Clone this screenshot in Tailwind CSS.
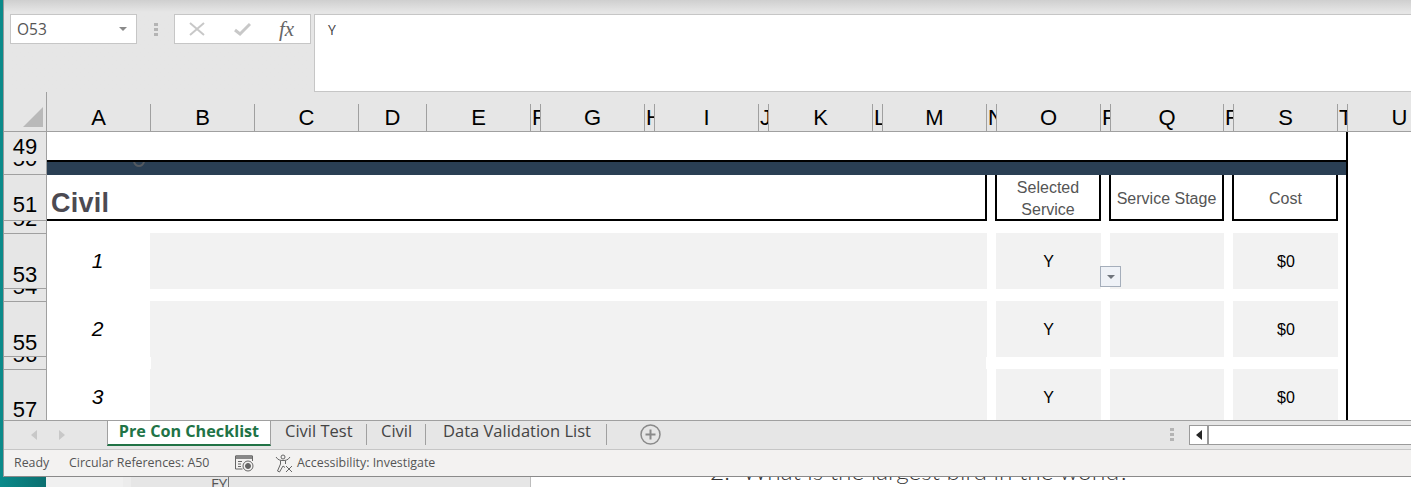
<!DOCTYPE html>
<html>
<head>
    <meta charset="UTF-8">
    <script src="https://cdn.jsdelivr.net/npm/@tailwindcss/browser@4"></script>
</head>
<body class="bg-white">
    <div class="w-[1411px] h-[487px] overflow-hidden flex flex-col font-['Liberation_Sans',Arial,sans-serif]">
        <div class="h-[477px] flex">
            <div class="w-[3px] shrink-0 bg-[#0b8a8a]"></div>
            <div class="w-[1408px] shrink-0 flex flex-col border-l border-[#9a9a9a]">

                <!-- formula bar -->
                <div class="h-[92px] bg-linear-to-b from-[#cfcfcf] to-[#e6e6e6] to-[12px] flex items-start pt-[14px] pl-[6px]">
                    <div class="w-[127px] h-[30px] shrink-0 bg-white border border-[#c6c6c6] flex items-center justify-between pl-[6px] pr-[9px]">
                        <span class="pt-[1px] font-['Open_Sans',sans-serif] text-[15.5px] text-[#555]">O53</span>
                        <svg width="8" height="4" viewBox="0 0 8 4"><path d="M0 0h8L4 4z" fill="#8a8a8a"/></svg>
                    </div>
                    <div class="w-[37px] h-[30px] shrink-0 flex items-center justify-center">
                        <svg width="4" height="13" viewBox="0 0 4 13" fill="#b4b4b4"><rect width="4" height="3"/><rect y="5" width="4" height="3"/><rect y="10" width="4" height="3"/></svg>
                    </div>
                    <div class="w-[137px] h-[30px] shrink-0 bg-white border border-[#c6c6c6] flex items-center pl-[14px]">
                        <svg width="16" height="14" viewBox="0 0 16 14"><path d="M1 1l14 12M15 1L1 13" stroke="#c8c8c8" stroke-width="2" fill="none"/></svg>
                        <svg class="ml-[29px]" width="17" height="14" viewBox="0 0 17 14"><path d="M1 8l5 4L16 2" stroke="#c8c8c8" stroke-width="3" fill="none"/></svg>
                        <span class="ml-[28px] font-['Liberation_Serif',serif] italic text-[21px] text-[#666] leading-none">fx</span>
                    </div>
                    <div class="ml-[3px] w-[1097px] h-[78px] shrink-0 bg-white border-l border-y border-[#c6c6c6] pl-[13px] pt-[4px] font-['Open_Sans',sans-serif] text-[14px] text-[#444]">Y</div>
                </div>

                <!-- sheet -->
                <div class="h-[328px] overflow-hidden bg-white grid grid-cols-[43px_103px_104px_104px_68px_104px_10px_104px_10px_104px_10px_104px_10px_104px_10px_104px_10px_113px_10px_104px_10px_104px] grid-rows-[40px_29px_14px_46px_12px_56px_12px_56px_12px_51px]">

                    <!-- column letters -->
                    <div class="row-start-1 col-start-1 col-span-22 bg-[#e6e6e6] border-b border-[#a0a0a0]"></div>
                    <div class="row-start-1 col-start-1 flex items-end justify-end pb-[4px] pr-[3px] border-r border-b border-[#a0a0a0] z-10">
                        <svg width="20" height="20" viewBox="0 0 20 20"><path d="M20 0v20H0z" fill="#b9b9b9"/></svg>
                    </div>
                    <div class="row-start-1 col-start-2 self-end h-[28px] border-b border-[#a0a0a0] text-center text-[22px] leading-[27px] z-10">A</div>
                    <div class="row-start-1 col-start-3 self-end h-[28px] border-l border-b border-[#a0a0a0] text-center text-[22px] leading-[27px] z-10">B</div>
                    <div class="row-start-1 col-start-4 self-end h-[28px] border-l border-b border-[#a0a0a0] text-center text-[22px] leading-[27px] z-10">C</div>
                    <div class="row-start-1 col-start-5 self-end h-[28px] border-l border-b border-[#a0a0a0] text-center text-[22px] leading-[27px] z-10">D</div>
                    <div class="row-start-1 col-start-6 self-end h-[28px] border-l border-b border-[#a0a0a0] text-center text-[22px] leading-[27px] z-10">E</div>
                    <div class="row-start-1 col-start-7 self-end h-[28px] border-l border-b border-[#a0a0a0] overflow-hidden pl-[1px] text-[22px] leading-[27px] z-10">F</div>
                    <div class="row-start-1 col-start-8 self-end h-[28px] border-l border-b border-[#a0a0a0] text-center text-[22px] leading-[27px] z-10">G</div>
                    <div class="row-start-1 col-start-9 self-end h-[28px] border-l border-b border-[#a0a0a0] overflow-hidden pl-[1px] text-[22px] leading-[27px] z-10">H</div>
                    <div class="row-start-1 col-start-10 self-end h-[28px] border-l border-b border-[#a0a0a0] text-center text-[22px] leading-[27px] z-10">I</div>
                    <div class="row-start-1 col-start-11 self-end h-[28px] border-l border-b border-[#a0a0a0] overflow-hidden pl-[1px] text-[22px] leading-[27px] z-10">J</div>
                    <div class="row-start-1 col-start-12 self-end h-[28px] border-l border-b border-[#a0a0a0] text-center text-[22px] leading-[27px] z-10">K</div>
                    <div class="row-start-1 col-start-13 self-end h-[28px] border-l border-b border-[#a0a0a0] overflow-hidden pl-[1px] text-[22px] leading-[27px] z-10">L</div>
                    <div class="row-start-1 col-start-14 self-end h-[28px] border-l border-b border-[#a0a0a0] text-center text-[22px] leading-[27px] z-10">M</div>
                    <div class="row-start-1 col-start-15 self-end h-[28px] border-l border-b border-[#a0a0a0] overflow-hidden pl-[1px] text-[22px] leading-[27px] z-10">N</div>
                    <div class="row-start-1 col-start-16 self-end h-[28px] border-l border-b border-[#a0a0a0] text-center text-[22px] leading-[27px] z-10">O</div>
                    <div class="row-start-1 col-start-17 self-end h-[28px] border-l border-b border-[#a0a0a0] overflow-hidden pl-[1px] text-[22px] leading-[27px] z-10">P</div>
                    <div class="row-start-1 col-start-18 self-end h-[28px] border-l border-b border-[#a0a0a0] text-center text-[22px] leading-[27px] z-10">Q</div>
                    <div class="row-start-1 col-start-19 self-end h-[28px] border-l border-b border-[#a0a0a0] overflow-hidden pl-[1px] text-[22px] leading-[27px] z-10">R</div>
                    <div class="row-start-1 col-start-20 self-end h-[28px] border-l border-b border-[#a0a0a0] text-center text-[22px] leading-[27px] z-10">S</div>
                    <div class="row-start-1 col-start-21 self-end h-[28px] border-l border-b border-[#a0a0a0] overflow-hidden pl-[1px] text-[22px] leading-[27px] z-10">T</div>
                    <div class="row-start-1 col-start-22 self-end h-[28px] border-l border-b border-[#a0a0a0] text-center text-[22px] leading-[27px] z-10">U</div>

                    <!-- row numbers -->
                    <div class="row-start-2 col-start-1 bg-[#e6e6e6] border-r border-[#a0a0a0] overflow-hidden flex items-end justify-center pb-[3px] text-[22px] leading-[22px]">49</div>
                    <div class="row-start-3 col-start-1 bg-[#e6e6e6] border-r border-b border-[#a0a0a0] overflow-hidden flex items-end justify-center pb-[4px] text-[22px] leading-[22px]">50</div>
                    <div class="row-start-4 col-start-1 bg-[#e6e6e6] border-r border-b border-[#a0a0a0] overflow-hidden flex items-end justify-center pb-[4px] text-[22px] leading-[22px]">51</div>
                    <div class="row-start-5 col-start-1 bg-[#e6e6e6] border-r border-[#a0a0a0] overflow-hidden flex items-end justify-center pb-[3px] text-[22px] leading-[22px]">52</div>
                    <div class="row-start-6 col-start-1 bg-[#e6e6e6] border-r border-y border-[#a0a0a0] overflow-hidden flex items-end justify-center pb-[2px] text-[22px] leading-[22px]">53</div>
                    <div class="row-start-7 col-start-1 bg-[#e6e6e6] border-r border-[#a0a0a0] overflow-hidden flex items-end justify-center pb-[3px] text-[22px] leading-[22px]">54</div>
                    <div class="row-start-8 col-start-1 bg-[#e6e6e6] border-r border-y border-[#a0a0a0] overflow-hidden flex items-end justify-center pb-[2px] text-[22px] leading-[22px]">55</div>
                    <div class="row-start-9 col-start-1 bg-[#e6e6e6] border-r border-[#a0a0a0] overflow-hidden flex items-end justify-center pb-[3px] text-[22px] leading-[22px]">56</div>
                    <div class="row-start-10 col-start-1 bg-[#e6e6e6] border-r border-t border-[#a0a0a0] overflow-hidden flex items-end justify-center text-[22px] leading-[20px]">57</div>

                    <!-- right edge of the print area -->
                    <div class="row-start-2 row-span-9 col-start-21 -mr-[1px] border-r-2 border-black"></div>

                    <!-- section bar -->
                    <div class="relative row-start-3 col-start-2 col-span-20 -mt-[1px] -mr-[1px] bg-[#2a3f54] border-t-2 border-r-2 border-black">
                        <svg class="absolute left-[85px] top-0" width="14" height="6" viewBox="0 0 14 6"><path d="M2 0c1 3 3 4 5 4s4-1 5-4" stroke="#555a60" stroke-width="2" fill="none"/></svg>
                    </div>

                    <!-- Civil header -->
                    <div class="row-start-4 col-start-2 col-span-13 -mr-[1px] border-r-2 border-b-2 border-black pl-[4px] flex items-end font-bold text-[27px] leading-[32px] tracking-[0.25px] text-[#4c4a52]">Civil</div>
                    <div class="row-start-4 col-start-16 -mx-[1px] border-x-2 border-b-2 border-black pt-[4px] flex items-center justify-center text-center text-[16px] leading-[22px] text-[#555]">Selected<br>Service</div>
                    <div class="row-start-4 col-start-18 -mx-[1px] border-x-2 border-b-2 border-black pt-[4px] flex items-center justify-center text-[16px] leading-[22px] text-[#555]">Service Stage</div>
                    <div class="row-start-4 col-start-20 -mx-[1px] border-x-2 border-b-2 border-black pt-[4px] pl-[1px] flex items-center justify-center text-[16px] leading-[22px] text-[#555]">Cost</div>

                    <!-- item 1 -->
                    <div class="row-start-6 col-start-2 pr-[2px] flex items-center justify-center italic text-[21px] text-black">1</div>
                    <div class="row-start-6 col-start-3 col-span-12 -mr-[1px] bg-[#f2f2f2]"></div>
                    <div class="row-start-6 col-start-16 -mr-[1px] pt-[2px] bg-[#f2f2f2] flex items-center justify-center text-[16px] text-black">Y</div>
                    <div class="row-start-6 col-start-18 -mr-[1px] bg-[#f2f2f2]"></div>
                    <div class="row-start-6 col-start-20 -mr-[1px] pt-[2px] pl-[1px] bg-[#f2f2f2] flex items-center justify-center text-[16px] text-black">$0</div>

                    <!-- item 2 -->
                    <div class="row-start-8 col-start-2 pr-[2px] flex items-center justify-center italic text-[21px] text-black">2</div>
                    <div class="row-start-8 col-start-3 col-span-12 -mr-[1px] bg-[#f2f2f2]"></div>
                    <div class="row-start-9 col-start-3 col-span-12 ml-[1px] bg-[#f2f2f2]"></div>
                    <div class="row-start-8 col-start-16 -mr-[1px] pt-[2px] bg-[#f2f2f2] flex items-center justify-center text-[16px] text-black">Y</div>
                    <div class="row-start-8 col-start-18 -mr-[1px] bg-[#f2f2f2]"></div>
                    <div class="row-start-8 col-start-20 -mr-[1px] pt-[2px] pl-[1px] bg-[#f2f2f2] flex items-center justify-center text-[16px] text-black">$0</div>

                    <!-- item 3 -->
                    <div class="row-start-10 col-start-2 pr-[2px] flex items-start pt-[16px] justify-center italic text-[21px] leading-[24px] text-black">3</div>
                    <div class="row-start-10 col-start-3 col-span-12 -mr-[1px] bg-[#f2f2f2]"></div>
                    <div class="row-start-10 col-start-16 -mr-[1px] bg-[#f2f2f2] flex items-start pt-[19px] justify-center text-[16px] leading-[20px] text-black">Y</div>
                    <div class="row-start-10 col-start-18 -mr-[1px] bg-[#f2f2f2]"></div>
                    <div class="row-start-10 col-start-20 -mr-[1px] pl-[1px] bg-[#f2f2f2] flex items-start pt-[19px] justify-center text-[16px] leading-[20px] text-black">$0</div>

                    <!-- validation dropdown over cell O53 -->
                    <div class="relative row-start-6 col-start-17">
                        <div class="absolute left-0 top-[33px] w-[21px] h-[21px] bg-[#eff2f7] border border-[#a5aebb] flex items-center justify-center">
                            <svg width="8" height="4" viewBox="0 0 8 4"><path d="M0 0h8L4 4z" fill="#70757d"/></svg>
                        </div>
                    </div>
                </div>

                <!-- sheet tabs -->
                <div class="h-[30px] overflow-hidden bg-[#e6e6e6] border-t border-b border-t-[#a0a0a0] border-b-[#c6c6c6] flex items-start font-['Open_Sans',sans-serif] text-[16.5px] text-[#444]">
                    <div class="w-[103px] h-[28px] shrink-0 flex items-center pl-[27px] gap-[22px]">
                        <svg width="6" height="10" viewBox="0 0 6 10"><path d="M6 0v10L0 5z" fill="#c8c8c8"/></svg>
                        <svg width="6" height="10" viewBox="0 0 6 10"><path d="M0 0v10l6-5z" fill="#c8c8c8"/></svg>
                    </div>
                    <div class="w-[164px] h-[25px] shrink-0 bg-white border-x border-b-2 border-x-[#a0a0a0] border-b-[#217346] text-center font-bold text-[16.2px] text-[#217346] leading-[20px]">Pre Con Checklist</div>
                    <div class="w-[96px] h-[21px] shrink-0 mt-[3px] border-r border-[#a0a0a0] pl-[14px] leading-[13px]">Civil Test</div>
                    <div class="w-[59px] h-[21px] shrink-0 mt-[3px] border-r border-[#a0a0a0] pl-[14px] leading-[13px]">Civil</div>
                    <div class="w-[181px] h-[21px] shrink-0 mt-[3px] border-r border-[#a0a0a0] pl-[17px] leading-[13px]">Data Validation List</div>
                    <svg class="ml-[33px] mt-[3px] shrink-0" width="21" height="21" viewBox="0 0 21 21"><circle cx="10.5" cy="10.5" r="9.5" stroke="#8a8a8a" stroke-width="1.5" fill="none"/><path d="M10.5 5.5v10M5.5 10.5h10" stroke="#8a8a8a" stroke-width="2" fill="none"/></svg>
                    <svg class="ml-[509px] mt-[7px] shrink-0" width="4" height="13" viewBox="0 0 4 13" fill="#b4b4b4"><rect width="4" height="3"/><rect y="5" width="4" height="3"/><rect y="10" width="4" height="3"/></svg>
                    <div class="ml-[15px] mt-[4px] w-[240px] h-[20px] shrink-0 bg-white border border-[#9a9a9a] flex">
                        <div class="w-[19px] border-r-2 border-[#9a9a9a] flex items-center justify-center">
                            <svg width="6" height="10" viewBox="0 0 6 10"><path d="M6 0v10L0 5z" fill="#262626"/></svg>
                        </div>
                    </div>
                </div>

                <!-- status bar -->
                <div class="h-[27px] bg-[#f3f2f1] border-b border-[#8a8a8a] flex items-center font-['Open_Sans',sans-serif] text-[12.4px] text-[#555]">
                    <span class="ml-[10px] w-[55px] shrink-0">Ready</span>
                    <span class="w-[166px] shrink-0">Circular References: A50</span>
                    <svg class="shrink-0" width="19" height="17" viewBox="0 0 19 17" fill="none" stroke="#666"><path d="M.5 1h17M.5 3h17" stroke-width="1.4"/><path d="M.5 1v13h7M17.5 1v5"/><path d="M3 6.5h4M3 9h3M3 11.5h3" /><circle cx="13" cy="11" r="5"/><circle cx="13" cy="11" r="2.5" fill="#666"/></svg>
                    <svg class="ml-[21px] shrink-0" width="19" height="19" viewBox="0 0 19 19" fill="none" stroke="#666"><circle cx="8" cy="3" r="2"/><path d="M1 3c2 3 4 3.500 7 3.500S13 6 15 3"/><path d="M5.500 6.500V10L2.500 17l2 1 3.500-6 2 1.500M10.500 6.500V10"/><path d="M11 12l6 6M17 12l-6 6"/></svg>
                    <span class="ml-[3px] shrink-0">Accessibility: Investigate</span>
                </div>
            </div>
        </div>

        <!-- window behind Excel -->
        <div class="h-[10px] flex overflow-hidden">
            <div class="w-[46px] shrink-0 bg-linear-to-r from-[#0a8a8a] to-[#0b6f70]"></div>
            <div class="w-[77px] shrink-0 bg-[#f0f0f0]"></div>
            <div class="w-[8px] shrink-0 bg-[#ececec]"></div>
            <div class="w-[80px] shrink-0 bg-[#e6e6e6]"></div>
            <div class="w-[320px] shrink-0 bg-[#e6e6e6] border-r border-[#bdbdbd] flex font-['Open_Sans',sans-serif] text-[15px] leading-[12px] text-[#555]">
                <span class="w-[18px] border-r border-[#777]">FY</span>
            </div>
            <div class="flex-1 bg-white pl-[179px] font-['Lato',sans-serif] font-light text-[24.4px] leading-[28px] text-[#333] whitespace-nowrap">
                <div class="-mt-[20px]">2.&nbsp; What is the largest bird in the world?</div>
            </div>
        </div>
    </div>
</body>
</html>
